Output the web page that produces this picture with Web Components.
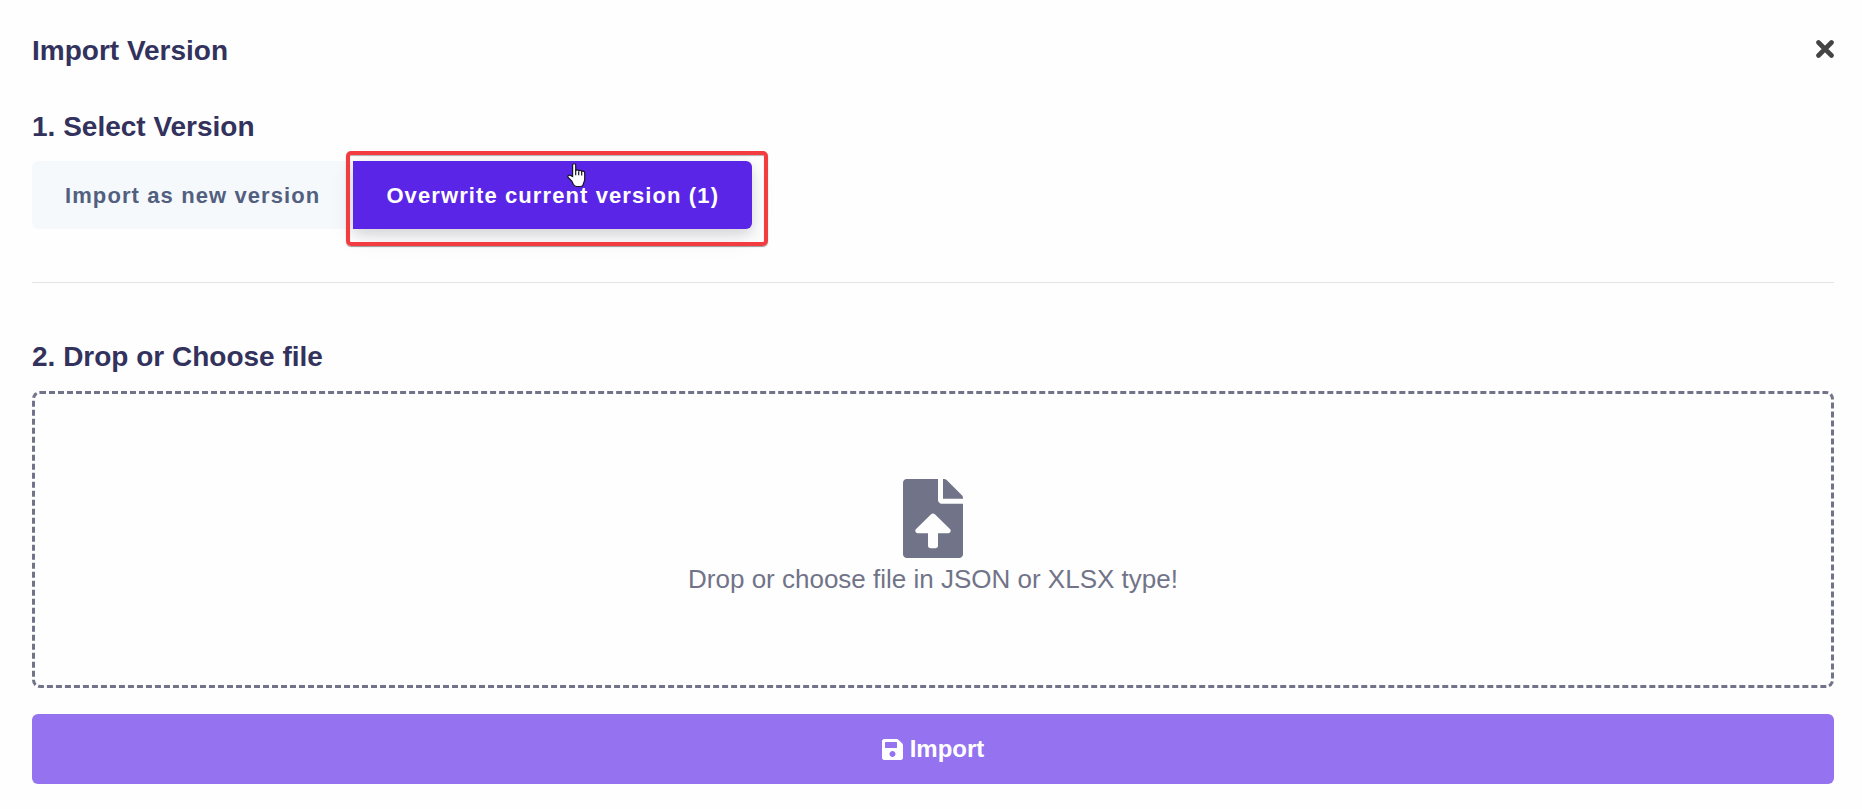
<!DOCTYPE html>
<html lang="en">
<head>
<meta charset="utf-8">
<meta name="viewport" content="width=device-width, initial-scale=1">
<title>Import Version</title>
<style>
body { margin: 0; background: #fefefe; font-family: "Liberation Sans", Arial, sans-serif; color: #32325d; }
</style>
</head>
<body>
<import-dialog>
  <span slot="title">Import Version</span>
  <import-step>
    <span slot="heading">1. Select Version</span>
    <version-toggle></version-toggle>
  </import-step>
  <import-step>
    <span slot="heading">2. Drop or Choose file</span>
    <drop-zone>Drop or choose file in JSON or XLSX type!</drop-zone>
    <submit-button>Import</submit-button>
  </import-step>
</import-dialog>
<script>
function define(name, html) {
  const template = document.createElement('template');
  template.innerHTML = html;
  customElements.define(name, class extends HTMLElement {
    constructor() {
      super();
      this.attachShadow({ mode: 'open' }).append(template.content.cloneNode(true));
    }
  });
}

define('close-button', `
<style>
:host { display: block; padding-top: 7px; }
button { display: block; margin: 0; padding: 0; border: 0; background: none; color: #444; }
svg { display: block; width: 18px; height: 18px; }
</style>
<button type="button" aria-label="Close">
  <svg viewBox="0 0 18 18" fill="none" stroke="currentColor" stroke-width="4.600" stroke-linecap="round"><path d="M2.500 2.500 15.500 15.500M15.500 2.500 2.500 15.500"/></svg>
</button>`);

define('import-dialog', `
<style>
:host { display: block; padding: 33px 28px 24px 32px; }
header { display: flex; align-items: flex-start; justify-content: space-between; margin-bottom: 40px; }
h1 { margin: 0; font-size: 28px; line-height: 36px; font-weight: 700; }
</style>
<header><h1><slot name="title"></slot></h1><close-button></close-button></header>
<slot></slot>`);

define('import-step', `
<style>
:host { display: block; }
h2 { margin: 0 0 16px; font-size: 28px; line-height: 36px; font-weight: 700; }
:host(:first-of-type) section { padding-bottom: 53px; border-bottom: 1px solid #e4e4e6; margin-bottom: 56px; }
</style>
<section><h2><slot name="heading"></slot></h2><slot></slot></section>`);

define('version-toggle', `
<style>
:host { display: flex; }
button { box-sizing: border-box; height: 68px; margin: 0; padding: 2px 33px 0; border: 0; font: 700 22px/28px "Liberation Sans", Arial, sans-serif; letter-spacing: 0.05em; background: #f5f9fc; color: #525f7f; border-radius: 6px 0 0 6px; }
.choice { position: relative; }
.choice button { display: block; background: #5a25e6; color: #fff; border-radius: 0 6px 6px 0; box-shadow: 0 8px 24px rgba(50,50,93,.1), 0 5px 12px rgba(0,0,0,.1); }
/* callout frame and pointer lie over the selected choice */
.frame { position: absolute; inset: -10px -16px -17px -7px; border: 4px solid #f23c3f; border-radius: 5px; pointer-events: none; box-shadow: 0 1px 1px rgba(0,0,0,.4), inset 0 1px 1px rgba(0,0,0,.3); }
.pointer { position: absolute; left: 214px; top: 2px; width: 19px; height: 25px; }
</style>
<button type="button" aria-pressed="false">Import as new version</button>
<div class="choice">
  <button type="button" aria-pressed="true">Overwrite current version (1)</button>
  <div class="frame"></div>
  <svg class="pointer" viewBox="0 0 19 25" aria-hidden="true"><path d="M5.6 13.5V2.3C5.6.2 8.7.2 8.7 2.3V8c.2-1.500 2.800-1.400 3 .2.500-1.300 2.800-1 3 .5.600-1.100 3-.7 3 1.300v6.200c0 2.200-1 3-1.300 4.500-.2 1.600-1 2.800-3 2.800H9.800c-2 0-2.800-.9-3.500-2.300L4.800 18 1.400 14.800C-.2 13 1.900 11.500 3.500 12.400z" fill="#fff" stroke="#151525" stroke-width="1.200"/><path d="M8.700 7.500v4.700M11.700 8.500v3.800M14.700 9.200v3.300" stroke="#151525" stroke-width="1.200"/></svg>
</div>`);

define('drop-zone', `
<style>
:host { display: block; }
label { box-sizing: border-box; display: flex; flex-direction: column; align-items: center; gap: 5px; padding: 85px 24px 90px; border: 3px dashed #717488; border-radius: 8px; color: #717488; font-size: 26px; line-height: 32px; }
svg { width: 60px; height: 79px; }
input { position: absolute; width: 1px; height: 1px; opacity: 0; }
</style>
<label>
  <svg viewBox="0 0 384 512" preserveAspectRatio="none" fill="currentColor" aria-hidden="true"><path d="M224 136V0H24C10.700 0 0 10.700 0 24v464c0 13.300 10.700 24 24 24h336c13.300 0 24-10.700 24-24V160H248c-13.200 0-24-10.800-24-24zm65.180 216.010H224v80c0 8.840-7.160 16-16 16h-32c-8.840 0-16-7.160-16-16v-80H94.820c-14.280 0-21.410-17.290-11.270-27.360l96.420-95.700c6.650-6.610 17.390-6.610 24.040 0l96.420 95.700c10.150 10.070 3.030 27.360-11.250 27.360zM377 105L279.100 7c-4.500-4.500-10.600-7-17-7H256v128h128v-6.100c0-6.300-2.500-12.400-7-16.900z"/></svg>
  <span><slot></slot></span>
  <input type="file" accept=".json,.xlsx">
</label>`);

define('submit-button', `
<style>
:host { display: block; margin-top: 26px; }
button { box-sizing: border-box; display: flex; align-items: center; justify-content: center; gap: 7px; width: 100%; height: 70px; margin: 0; padding: 0 32px; border: 0; border-radius: 6px; background: #9572f0; color: #fff; font: 700 24px/28px "Liberation Sans", Arial, sans-serif; }
svg { width: 21px; height: 21px; }
</style>
<button type="button">
  <svg viewBox="0 32 448 448" fill="currentColor" aria-hidden="true"><path d="M433.941 129.941l-83.882-83.882A48 48 0 0 0 316.118 32H48C21.490 32 0 53.490 0 80v352c0 26.510 21.490 48 48 48h352c26.510 0 48-21.490 48-48V163.882a48 48 0 0 0-14.059-33.941zM224 416c-35.346 0-64-28.654-64-64 0-35.346 28.654-64 64-64s64 28.654 64 64c0 35.346-28.654 64-64 64zm96-304.520V212c0 6.627-5.373 12-12 12H76c-6.627 0-12-5.373-12-12V108c0-6.627 5.373-12 12-12h228.520c3.183 0 6.235 1.264 8.485 3.515l3.480 3.480A11.996 11.996 0 0 1 320 111.480z"/></svg>
  <span><slot></slot></span>
</button>`);
</script>
</body>
</html>
